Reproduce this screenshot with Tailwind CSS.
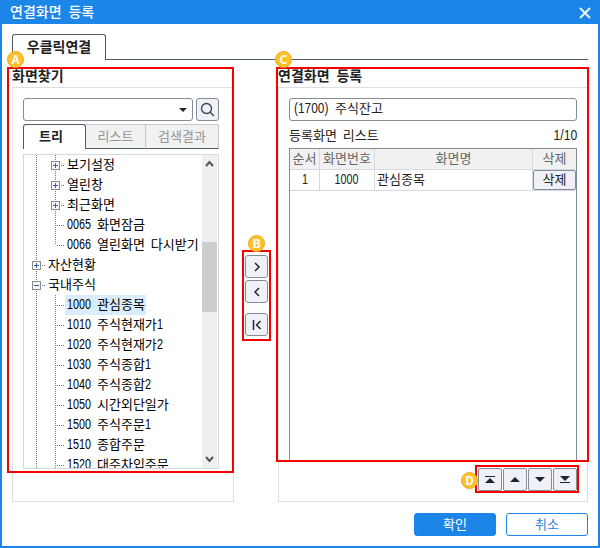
<!DOCTYPE html>
<html lang="ko">
<head>
<meta charset="utf-8">
<title>연결화면 등록</title>
<script src="https://cdn.jsdelivr.net/npm/@tailwindcss/browser@4"></script>
</head>
<body class="w-[600px] h-[548px] overflow-hidden font-['Noto_Sans_CJK_KR',sans-serif] text-[13px] leading-5 text-[#222]">
<main class="relative flex h-[548px] w-[600px] flex-col bg-white border-2 border-t-0 border-[#1c86e8]">
  <header class="flex h-6 shrink-0 items-center justify-between bg-[#1c86e8] pl-2 pr-[7px] pb-[2px] text-[14px] font-medium text-white">
    <span class="whitespace-pre">연결화면 <span class="ml-[3px]">등록</span></span>
    <svg class="mt-[3px] size-[12px]" viewBox="0 0 12 12" fill="none" stroke="#e8f4ff" stroke-width="2"><path d="M1 1l10 10M11 1L1 11"/></svg>
  </header>
  <nav class="flex h-[36px] shrink-0 items-end pl-[10px] pr-[10px]">
    <div class="flex h-[26px] w-[94px] items-center justify-center rounded-t-[3px] border border-b-0 border-[#525b68] pb-[3px] text-[14px] font-bold">우클릭연결</div>
    <div class="h-px flex-1 bg-[#525b68]"></div>
  </nav>

  <div class="flex h-[442px] shrink-0 pt-[6px] pl-[10px]">
    <section class="w-[222px]">
      <h2 class="h-[21px] leading-[19px] text-[14px] font-bold">화면찾기</h2>
      <div class="h-[415px] border border-[#dcdfe4] px-[10px] pt-[10px]">
        <div class="flex gap-[3px]">
          <div class="flex h-[23px] w-[170px] items-center justify-end rounded-[3px] border border-[#858c97] pr-[5px]">
            <svg class="h-[4px] w-[8px]" viewBox="0 0 8 4"><path fill="#222" d="M0 0h8L4 4z"/></svg>
          </div>
          <div class="flex size-[23px] items-center justify-center rounded-[3px] border border-[#858c97] bg-[#f0f1f6]">
            <svg class="size-[15px]" viewBox="0 0 15 15" fill="none" stroke="#354255" stroke-width="1.3"><circle cx="6.5" cy="6.5" r="5"/><path d="M10.2 10.2L14 14"/></svg>
          </div>
        </div>
        <div class="mt-[3px] flex h-[25px] w-[196px] text-center leading-[21px]">
          <div class="w-[63px] rounded-t-[3px] border border-b-0 border-[#525b68] pl-[15px] text-left font-bold">트리</div>
          <div class="w-[60px] border border-l-0 border-[#c5c7cd] border-b-[#525b68] bg-[#f1f1f1] text-[#969696]">리스트</div>
          <div class="w-[73px] rounded-tr-[3px] border border-l-0 border-[#c5c7cd] border-b-[#525b68] bg-[#f1f1f1] text-[#969696]">검색결과</div>
        </div>
        <div class="mt-[5px] flex h-[315px] w-[196px] overflow-hidden border border-[#d5d9dd] text-black">
          <div id="tree" class="w-[178px] overflow-hidden"></div>
          <div class="flex w-[15px] flex-col items-center bg-[#efefef]">
            <svg class="mt-[5px] h-[7px] w-[9px]" viewBox="0 0 9 7" fill="none" stroke="#555" stroke-width="2"><path d="M1 6l3.500-4L8 6"/></svg>
            <div class="mt-[75px] h-[70px] w-full bg-[#cdcdcd]"></div>
            <svg class="mt-[144px] h-[7px] w-[9px]" viewBox="0 0 9 7" fill="none" stroke="#555" stroke-width="2"><path d="M1 1l3.500 4L8 1"/></svg>
          </div>
        </div>
      </div>
    </section>

    <section class="w-[44px] pl-[11px] pt-[189px]">
      <div class="flex size-[23px] items-center justify-center rounded-[3px] border border-[#858c97] bg-[#f0f1f6]"><svg class="size-[10px]" viewBox="0 0 10 10" fill="none" stroke="#1d2433" stroke-width="1.500"><path d="M3 1l4 4-4 4"/></svg></div>
      <div class="mt-[2px] flex size-[23px] items-center justify-center rounded-[3px] border border-[#858c97] bg-[#f0f1f6]"><svg class="size-[10px]" viewBox="0 0 10 10" fill="none" stroke="#1d2433" stroke-width="1.500"><path d="M7 1L3 5l4 4"/></svg></div>
      <div class="mt-[10px] flex size-[23px] items-center justify-center rounded-[3px] border border-[#858c97] bg-[#f0f1f6]"><svg class="size-[10px]" viewBox="0 0 10 10" fill="none" stroke="#1d2433" stroke-width="1.500"><path d="M1.500 0v10M8.500 1l-4 4 4 4"/></svg></div>
    </section>

    <section class="w-[310px]">
      <h2 class="h-[21px] whitespace-pre leading-[19px] text-[14px] font-bold">연결화면 <span class="ml-[3px]">등록</span></h2>
      <div class="h-[415px] border border-[#dcdfe4] px-[10px] pt-[10px]">
        <div class="flex h-[23px] items-center rounded-[3px] border border-[#858c97] pl-[4px] pb-[3px]"><span class="inline-block w-[41px] origin-left scale-x-[.85] font-['Liberation_Sans'] text-[14px] leading-5">(1700)</span>주식잔고</div>
        <div class="mt-[4px] flex h-[23px] justify-between leading-5"><span>등록화면<span class="ml-[6px]">리스트</span></span><span class="origin-right scale-x-[.87] font-['Liberation_Sans'] text-[14px]">1/10</span></div>
        <div class="h-[313px] border border-b-0 border-[#858c97]">
          <div class="grid h-[21px] grid-cols-[30px_55px_158px_43px] border-b border-[#d5d9e2] bg-[#f1f1f1] text-center leading-[18px] text-[#666]">
            <div class="border-r border-[#d5d9e2]">순서</div><div class="border-r border-[#d5d9e2]">화면번호</div><div class="border-r border-[#d5d9e2]">화면명</div><div>삭제</div>
          </div>
          <div class="grid h-[21px] grid-cols-[30px_55px_158px_43px] border-b border-[#d5d9e2] text-center leading-[18px]">
            <div class="border-r border-[#d5d9e2]"><span class="inline-block scale-x-[.77] font-['Liberation_Sans'] text-[14px]">1</span></div><div class="border-r border-[#d5d9e2]"><span class="inline-block scale-x-[.77] font-['Liberation_Sans'] text-[14px]">1000</span></div><div class="border-r border-[#d5d9e2] pl-[2px] text-left">관심종목</div><div class="h-5 rounded-[2px] border border-[#858c97] bg-[#f0f1f6] leading-[16px]">삭제</div>
          </div>
        </div>
        <div class="mt-[7px] flex justify-end gap-px">
          <div class="flex h-[23px] w-6 items-center justify-center rounded-[2px] border border-[#858c97] bg-[#f0f1f6]"><svg class="h-[7px] w-[10px]" viewBox="0 0 10 7" fill="#1d2433"><path d="M0 0h10v1H0zM5 2l5 5H0z"/></svg></div>
          <div class="flex h-[23px] w-6 items-center justify-center rounded-[2px] border border-[#858c97] bg-[#f0f1f6]"><svg class="h-[5px] w-[10px]" viewBox="0 0 10 5" fill="#1d2433"><path d="M5 0l5 5H0z"/></svg></div>
          <div class="flex h-[23px] w-6 items-center justify-center rounded-[2px] border border-[#858c97] bg-[#f0f1f6]"><svg class="h-[5px] w-[10px]" viewBox="0 0 10 5" fill="#1d2433"><path d="M0 0h10L5 5z"/></svg></div>
          <div class="flex h-[23px] w-6 items-center justify-center rounded-[2px] border border-[#858c97] bg-[#f0f1f6]"><svg class="h-[7px] w-[10px]" viewBox="0 0 10 7" fill="#1d2433"><path d="M0 0h10L5 5zM0 6h10v1H0z"/></svg></div>
        </div>
      </div>
    </section>
  </div>

  <footer class="flex justify-end gap-[10px] pt-[11px] pr-[10px] text-center leading-[20px]">
    <div class="h-[23px] w-[82px] rounded-[3px] border border-[#1c86e8] bg-[#1c86e8] text-white">확인</div>
    <div class="h-[23px] w-[82px] rounded-[3px] border border-[#1c86e8] text-[#1c86e8]">취소</div>
  </footer>

  <!-- Callout frames and lettered markers over the dialog -->
  <div class="absolute left-[5px] top-[67px] h-[406px] w-[227px] border-2 border-[#f60000]"></div>
  <div class="absolute left-[240px] top-[250px] h-[91px] w-[29px] border-2 border-[#f60000]"></div>
  <div class="absolute left-[274px] top-[67px] h-[395px] w-[313px] border-2 border-[#f60000]"></div>
  <div class="absolute left-[473px] top-[465px] h-[28px] w-[104px] border-2 border-[#f60000]"></div>
  <div class="absolute left-[5px] top-[51px] size-[17px] rounded-full border border-[#e9aa1c] bg-[#ffc126] text-center text-[12px] font-bold leading-[14px] text-white">A</div>
  <div class="absolute left-[246px] top-[235px] size-[17px] rounded-full border border-[#e9aa1c] bg-[#ffc126] text-center text-[12px] font-bold leading-[14px] text-white">B</div>
  <div class="absolute left-[273px] top-[51px] size-[17px] rounded-full border border-[#e9aa1c] bg-[#ffc126] text-center text-[12px] font-bold leading-[14px] text-white">C</div>
  <div class="absolute left-[459px] top-[472px] size-[17px] rounded-full border border-[#e9aa1c] bg-[#ffc126] text-center text-[12px] font-bold leading-[14px] text-white">D</div>
</main>
<script>
// Each row: [depth, marker, code, label, state]
const rows = [
  [2,'+','','보기설정'],[2,'+','','열린창'],[2,'+','','최근화면'],
  [2,'','0065','화면잠금'],[2,'','0066','열린화면<span class="ml-[6px]">다시받기</span>','end'],
  [1,'+','','자산현황'],[1,'-','','국내주식'],
  [2,'','1000','관심종목','sel'],[2,'','1010','주식현재가1'],[2,'','1020','주식현재가2'],
  [2,'','1030','주식종합1'],[2,'','1040','주식종합2'],[2,'','1050','시간외단일가'],
  [2,'','1500','주식주문1'],[2,'','1510','종합주문'],[2,'','1520','대주차입주문']
];
document.getElementById('tree').innerHTML = rows.map(([d, m, code, label, state], i) => {
  const x = d === 2 ? 31.5 : 12.5;
  const w = d === 2 ? 41 : 22;
  const dash = 'stroke="#777" stroke-dasharray="1 1"';
  let g = `<path ${dash} d="M12.500 0V20"/>`;
  if (d === 2) g += `<path ${dash} d="M31.500 0V${state === 'end' ? 10 : 20}"/>`;
  g += `<path ${dash} d="M${x + 1.5} 10.500H${w - 1}"/>`;
  if (m) g += `<rect x="${x - 4}" y="6.500" width="8" height="8" rx="1" fill="#f5f7fa" stroke="#8c8c8c"/><path stroke="#3c5fae" d="M${x - 2.5} 10.500h5${m === '+' ? `M${x} 8v5` : ''}"/>`;
  const num = code ? `<span class="w-[30px] shrink-0 origin-left scale-x-[.77] font-['Liberation_Sans'] text-[14px]">${code}</span>` : '';
  const text = label.replace(/\d$/, n => `<span class="inline-block w-[6px] origin-left scale-x-[.77] font-['Liberation_Sans'] text-[14px]">${n}</span>`);
  return `<div class="flex h-5 whitespace-nowrap"><svg class="h-5 shrink-0" style="width:${w}px" fill="none" shape-rendering="crispEdges">${g}</svg><span class="flex h-5 pl-[2px] pr-[1px] leading-[18px] ${state === 'sel' ? 'bg-[#d9edff]' : ''}">${num}<span>${text}</span></span></div>`;
}).join('');
</script>
</body>
</html>
